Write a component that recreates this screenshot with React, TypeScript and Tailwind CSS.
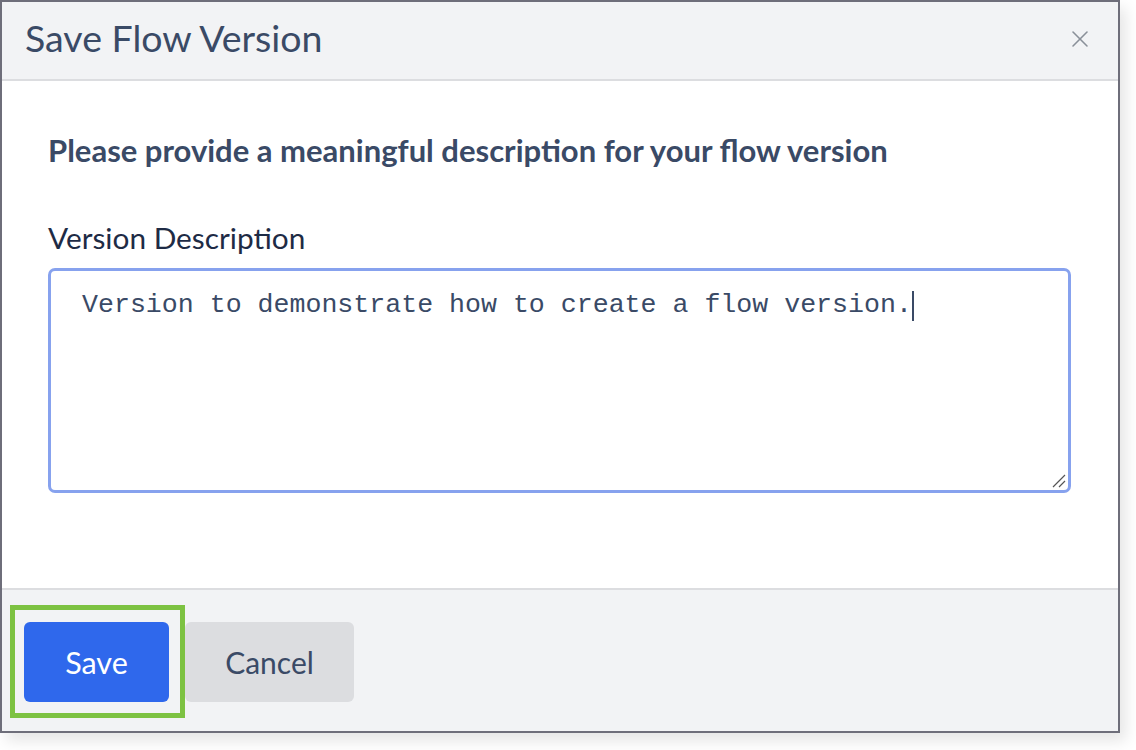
import { X } from 'lucide-react';

const sans = "font-['Lato','Open_Sans',sans-serif]";

const SaveFlowVersionDialog = () => {
  return (
    <div className="min-h-screen bg-white">
      <div
        className={`w-[1120px] h-[733px] flex flex-col border-2 border-[#6e6e7a] bg-white shadow-[6px_8px_14px_rgba(0,0,0,0.10)] ${sans}`}
      >
        {/* header */}
        <div className="h-[79px] flex items-center justify-between pl-[23px] pr-[24px] bg-[#f2f3f5] border-b-2 border-[#dcdde0]">
          <h1 className="text-[37.5px] text-[#3a4a66] leading-none -mt-[5px]">Save Flow Version</h1>
          <X className="w-[28px] h-[28px] text-[#8a9099] -mt-[3px]" strokeWidth={1.3} />
        </div>

        {/* body */}
        <div className="flex-1 bg-white pt-[54px] pl-[46px] pr-[47px]">
          <p className="text-[31px] font-bold text-[#3a4a66] leading-none">
            Please provide a meaningful description for your flow version
          </p>
          <label className="block mt-[57px] text-[29.8px] text-[#1e2b45] leading-none">Version Description</label>
          <div className="relative mt-[15px] h-[225px] rounded-[7px] border-[3px] border-[#87a2ee] bg-white px-[31px] pt-[18px]">
            <span className="font-['Liberation_Mono',monospace] text-[26.6px] leading-[32px] text-[#3a4a66] whitespace-pre">
              Version to demonstrate how to create a flow version.
            </span>
            <span className="inline-block align-middle w-[2px] h-[30px] bg-[#3a4a66] -mt-[4px]" />
            <svg className="absolute right-[2px] bottom-[2px]" width="14" height="14" viewBox="0 0 14 14">
              <path d="M1 13 L13 1 M7 13 L13 7" stroke="#555" strokeWidth="1.2" />
            </svg>
          </div>
        </div>

        {/* footer */}
        <div className="h-[143px] bg-[#f2f3f5] border-t-2 border-[#dcdde0] flex items-start pt-[15px] pl-[8px]">
          <div className="border-[5px] border-[#7dc242] pt-[12px] pb-[11px] pl-[9px] pr-[11px]">
            <button className="w-[145px] h-[80px] rounded-[6px] bg-[#2f68ec] text-white text-[30.5px] leading-none">
              Save
            </button>
          </div>
          <button className="mt-[17px] w-[169px] h-[80px] rounded-[6px] bg-[#dcdde0] text-[#3a4a66] text-[30px] leading-none">
            Cancel
          </button>
        </div>
      </div>
    </div>
  );
};

export default SaveFlowVersionDialog;
